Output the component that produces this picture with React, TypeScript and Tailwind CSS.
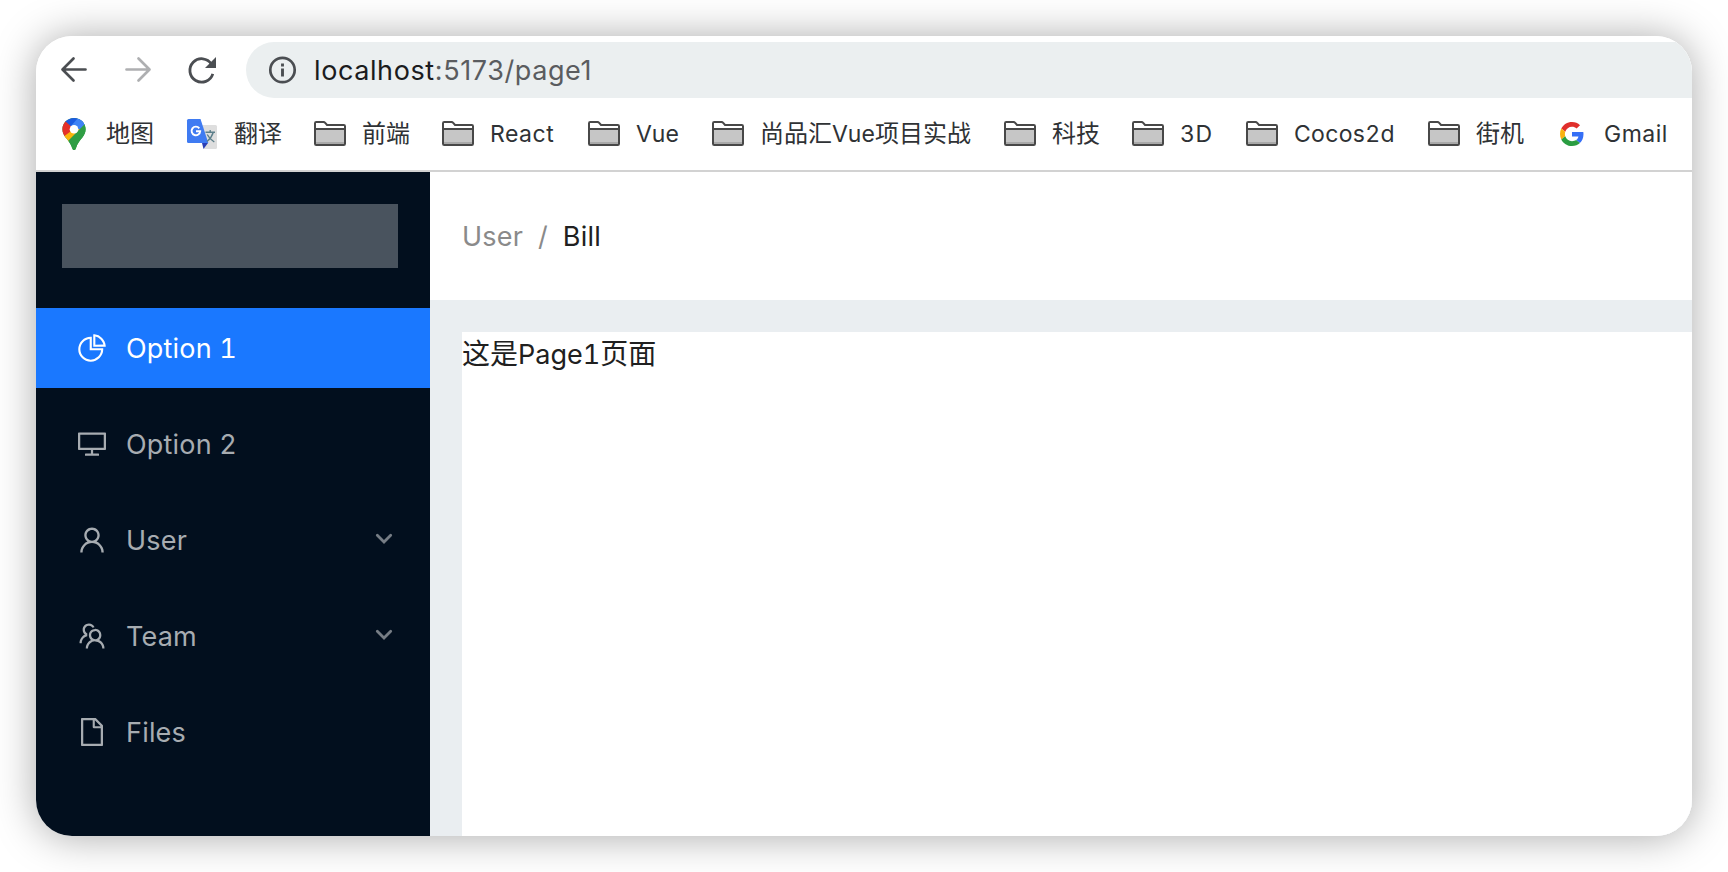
import { AiOutlinePieChart, AiOutlineDesktop, AiOutlineUser, AiOutlineTeam, AiOutlineFile } from "react-icons/ai";
import type { ReactNode } from "react";

function FolderIcon() {
  return (
    <svg width="32" height="26" viewBox="0 0 32 26" fill="none">
      <path d="M1 24V2.2Q1 1 2.200 1H9.500Q10.500 1 11.200 1.800L13 4H29.800Q31 4 31 5.200V24Z" fill="#fff" />
      <rect x="1" y="8" width="30" height="16" fill="#c6c6c6" />
      <rect x="1" y="21" width="30" height="3" fill="#a9a9a9" />
      <path d="M1 8H31" stroke="#484848" strokeWidth="2" />
      <path d="M1 22.800V2.200Q1 1 2.200 1H9.500Q10.500 1 11.200 1.800L13 4H29.800Q31 4 31 5.200V22.800Q31 24 29.800 24H2.200Q1 24 1 22.800Z" stroke="#484848" strokeWidth="2" />
    </svg>
  );
}

function MapsIcon() {
  return (
    <svg width="24" height="32" viewBox="0 0 24 32">
      <clipPath id="pin">
        <path d="M12 0C5.400 0 .400 5 .400 11.300c0 3.200 1.200 5.600 3.200 8.200 2.600 3.300 5 5.800 6.300 10.200.4 1.400 1 2.300 2.100 2.300s1.700-.9 2.100-2.300c1.300-4.400 3.700-6.900 6.300-10.200 2-2.600 3.200-5 3.200-8.200C23.600 5 18.600 0 12 0z" />
      </clipPath>
      <g clipPath="url(#pin)">
        <rect width="24" height="32" fill="#2f9e44" />
        <path d="M0 0H24V6L12 11 3 4Z" fill="#1c5be0" />
        <path d="M24 0V5L12 18 9 8 16 0Z" fill="#3f82f5" />
        <path d="M3 3L12 11 3 20H0V3Z" fill="#e5302a" />
        <path d="M12 11L1 19 6 24 18 11Z" fill="#fbb50c" />
        <path d="M24 5L6 23 12 32H24Z" fill="#2f9e44" />
      </g>
      <circle cx="12" cy="11.300" r="4.300" fill="#fff" />
    </svg>
  );
}

function TranslateIcon() {
  return (
    <svg width="32" height="32" viewBox="0 0 32 32">
      <path d="M12 7H29.500Q31 7 31 8.500V29.500Q31 31 29.500 31H18Z" fill="#dedede" />
      <path d="M16 25H22L17.500 31Z" fill="#2a3fb5" />
      <path d="M2.500 1H14.500L22.300 25H2.500Q1 25 1 23.500V2.500Q1 1 2.500 1Z" fill="#3f7bf2" />
      <path d="M13.300 10.300A4.300 4.300 0 1 0 14.200 13.200H10" fill="none" stroke="#fff" strokeWidth="1.900" />
      <path d="M19.500 14.300H29M24.200 12V14.300M27.200 14.500C26 18.500 23.500 21.500 21 23.500M21.200 16.500C23 20 25.500 22.300 28.300 24" fill="none" stroke="#5c7f8a" strokeWidth="1.400" />
    </svg>
  );
}

function GoogleIcon() {
  return (
    <svg width="24" height="24" viewBox="0 0 48 48">
      <path fill="#e02f2c" d="M24 9.500c3.540 0 6.710 1.220 9.210 3.600l6.850-6.850C35.900 2.380 30.470 0 24 0 14.620 0 6.510 5.380 2.560 13.220l7.980 6.190C12.430 13.720 17.740 9.500 24 9.500z" />
      <path fill="#356ff6" d="M46.980 24.550c0-1.570-.15-3.090-.38-4.550H24v9.020h12.940c-.58 2.960-2.260 5.480-4.780 7.180l7.730 6c4.510-4.180 7.090-10.360 7.090-17.650z" />
      <path fill="#f9b110" d="M10.530 28.590c-.48-1.450-.76-2.990-.76-4.590s.27-3.140.76-4.590l-7.980-6.190C.92 16.460 0 20.120 0 24c0 3.880.92 7.540 2.560 10.780l7.970-6.190z" />
      <path fill="#2a9d41" d="M24 48c6.480 0 11.930-2.130 15.890-5.810l-7.730-6c-2.150 1.450-4.920 2.300-8.160 2.300-6.260 0-11.570-4.220-13.470-9.910l-7.980 6.190C6.510 42.620 14.620 48 24 48z" />
    </svg>
  );
}

type Bookmark = { label: string; width: string; icon: ReactNode };

const bookmarks: Bookmark[] = [
  { label: "地图", width: "w-12", icon: <MapsIcon /> },
  { label: "翻译", width: "w-12", icon: <TranslateIcon /> },
  { label: "前端", width: "w-12", icon: <FolderIcon /> },
  { label: "React", width: "w-[66px] tracking-[0.5px]", icon: <FolderIcon /> },
  { label: "Vue", width: "w-11", icon: <FolderIcon /> },
  { label: "尚品汇Vue项目实战", width: "w-[212px]", icon: <FolderIcon /> },
  { label: "科技", width: "w-12", icon: <FolderIcon /> },
  { label: "3D", width: "w-[34px] tracking-[0.5px]", icon: <FolderIcon /> },
  { label: "Cocos2d", width: "w-[102px] tracking-[0.3px]", icon: <FolderIcon /> },
  { label: "街机", width: "w-12", icon: <FolderIcon /> },
  { label: "Gmail", width: "w-16 tracking-[0.5px]", icon: <GoogleIcon /> },
];

function Toolbar() {
  return (
    <div className="flex h-[68px] items-center pl-[23px]">
      <svg width="30" height="30" viewBox="0 0 30 30" fill="none" stroke="#4b4e52" strokeWidth="2.700" strokeLinecap="round" strokeLinejoin="round">
        <path d="M26.500 14.500H4M14.500 3.500L3.500 14.500L14.500 25.500" />
      </svg>
      <svg className="ml-[34px]" width="30" height="30" viewBox="0 0 30 30" fill="none" stroke="#aeafb1" strokeWidth="2.700" strokeLinecap="round" strokeLinejoin="round">
        <path d="M3.500 14.500H26M15.500 3.500L26.500 14.500L15.500 25.500" />
      </svg>
      <svg className="ml-[34px]" width="30" height="30" viewBox="0 0 30 30" fill="none">
        <path d="M24.500 9.200A11.700 11.700 0 1 0 25.800 18.800" stroke="#4b4e52" strokeWidth="2.800" strokeLinecap="butt" />
        <path d="M29 2V13H18Z" fill="#4b4e52" />
      </svg>
      <div className="ml-[29px] flex h-14 flex-1 items-center rounded-l-full bg-[#ebeff0] pl-[22px]">
        <svg width="30" height="30" viewBox="0 0 30 30" fill="none">
          <circle cx="14.500" cy="15" r="12.200" stroke="#4b4e52" strokeWidth="2.700" />
          <path d="M14.500 8.500V11.500M14.500 13.500V21.500" stroke="#4b4e52" strokeWidth="2.900" />
        </svg>
        <span className="ml-4 whitespace-nowrap pt-0.5 text-[27px] tracking-[0.6px] text-[#5a5c5f] proportional-nums">
          <span className="text-[#1b1c1e]">localhost</span>:5173/page1
        </span>
      </div>
    </div>
  );
}

function BookmarksBar() {
  return (
    <div className="flex h-[68px] items-center gap-8 border-b-2 border-[#d2d2d2] pb-[6px] pl-[22px]">
      {bookmarks.map((b) => (
        <div key={b.label} className="flex shrink-0 items-center gap-4">
          <span className="flex w-8 justify-center">{b.icon}</span>
          <span className={`${b.width} whitespace-nowrap text-[23px] leading-8 text-[#2f3235]`}>
            {b.label.split(/([A-Za-z0-9]+)/).map((part, i) =>
              i % 2 ? <span key={i}>{part}</span> : <span key={i} className="text-[24px]">{part}</span>,
            )}
          </span>
        </div>
      ))}
    </div>
  );
}

const menu = [
  { label: "Option 1", Icon: AiOutlinePieChart, active: true },
  { label: "Option 2", Icon: AiOutlineDesktop },
  { label: "User", Icon: AiOutlineUser, nested: true },
  { label: "Team", Icon: AiOutlineTeam, nested: true },
  { label: "Files", Icon: AiOutlineFile },
];

function Sidebar() {
  return (
    <aside className="flex w-[394px] shrink-0 flex-col bg-[#020f1e] pt-8">
      <div className="ml-[26px] h-16 w-[336px] bg-[#49535e]" />
      <nav className="mt-10 flex flex-col gap-4">
        {menu.map(({ label, Icon, active, nested }) => (
          <div
            key={label}
            className={`flex h-20 items-center pl-10 pr-[37px] text-[27px] tracking-[0.2px] ${active ? "bg-[#1a78ff] text-white" : "text-[#a7acb1]"}`}
          >
            <Icon className="mr-0.5 size-8 shrink-0" />
            <span className="ml-4 flex-1 pt-0.5">{label}</span>
            {nested && (
              <svg className="-mt-[3px]" width="18" height="12" viewBox="0 0 18 12" fill="none">
                <path d="M2.300 2.300L9 9L15.700 2.300" stroke="#767d85" strokeWidth="2.800" strokeLinecap="round" />
              </svg>
            )}
          </div>
        ))}
      </nav>
    </aside>
  );
}

export default function App() {
  return (
    <div className="h-[872px] w-[1728px] overflow-hidden bg-white p-9 font-['Inter','Noto_Sans_CJK_SC',sans-serif] tabular-nums">
      <div className="h-[800px] w-[1656px] rounded-[36px] shadow-[0_1px_42px_rgba(0,0,0,0.34)]">
        <div className="flex h-full flex-col overflow-hidden rounded-[36px] bg-white">
          <Toolbar />
          <BookmarksBar />
          <div className="flex min-h-0 flex-1">
            <Sidebar />
            <div className="flex min-w-0 flex-1 flex-col bg-[#eaeef1]">
              <header className="flex h-32 shrink-0 items-center bg-white pl-8 pt-0.5 text-[27px] text-[#8a8a8a]">
                <span className="tracking-[0.2px]">User</span>
                <span className="ml-[15px] mr-[15px]">/</span>
                <span className="tracking-[0.2px] text-[#202020]">Bill</span>
              </header>
              <main className="ml-8 mt-8 flex-1 bg-white text-[28px] leading-[44px] text-[#202020]">
                这是<span className="text-[27px]">Page1</span>页面
              </main>
            </div>
          </div>
        </div>
      </div>
    </div>
  );
}
